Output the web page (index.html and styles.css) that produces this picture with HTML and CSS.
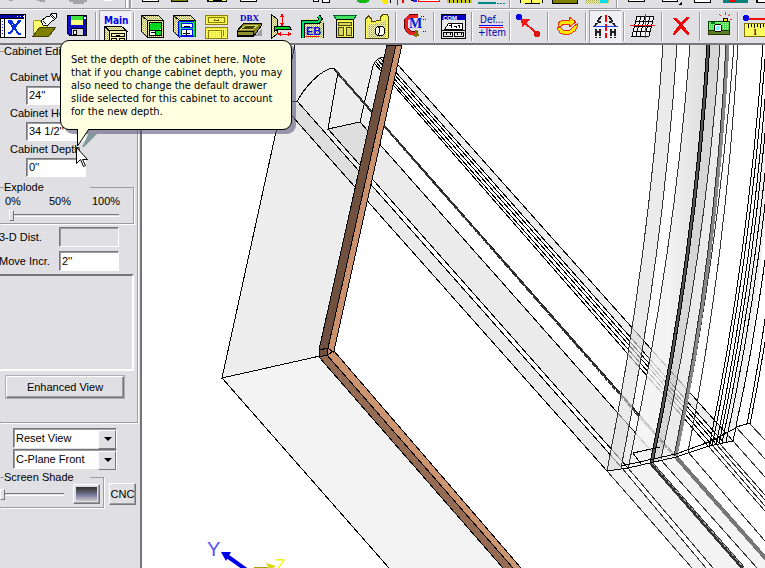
FILE: index.html
```html
<!DOCTYPE html>
<html lang="en">
<head>
    <meta charset="UTF-8">
    <meta name="viewport" content="width=device-width, initial-scale=1.0">
    <title>Cabinet Editor</title>
    <link rel="stylesheet" href="styles.css">
</head>
<body>
    <!-- shared fills for the icons -->
    <svg class="defs" width="0" height="0" aria-hidden="true">
        <defs>
            <pattern id="dither" width="2" height="2" patternUnits="userSpaceOnUse">
                <rect width="2" height="2" fill="#f4f4b8"/>
                <rect width="1" height="1" fill="#a0a040"/>
                <rect x="1" y="1" width="1" height="1" fill="#c8c878"/>
            </pattern>
            <pattern id="yellow" width="2" height="2" patternUnits="userSpaceOnUse">
                <rect width="2" height="2" fill="#ffff60"/>
                <rect width="1" height="1" fill="#e0d838"/>
            </pattern>
            <pattern id="lime" width="2" height="2" patternUnits="userSpaceOnUse">
                <rect width="2" height="2" fill="#50e050"/>
                <rect width="1" height="1" fill="#e0ffe0"/>
            </pattern>
            <linearGradient id="post" x1="0" x2="1">
                <stop offset="0" stop-color="#f4f4f4"/>
                <stop offset=".5" stop-color="#f0f0f0"/>
                <stop offset="1" stop-color="#d4d4d4"/>
            </linearGradient>
        </defs>
    </svg>

    <header class="toolbars">
        <div class="toolbar toolbar-top">
            <svg width="765" height="8" viewBox="0 0 765 8" shape-rendering="crispEdges" aria-hidden="true">
                <path d="M9 0h4v1h-4zM37 0h8v2h-5v-1h-3zM69 0h18v2h-3v2h-11v-2h-4z" fill="#a5a4ab"/>
                <path d="M104 0h8v1h-8z" fill="#fff"/>
                <path d="M125 0h1v8h-1zM129 0h2v8h-2z" fill="#9d9da1"/>
                <path d="M126 0h2v8h-2zM131 0h1v8h-1z" fill="#fff"/>
                <path d="M142 0h17v2h-17zM240 0h17v2h-17zM313 0h6v2h-6zM322 0h8v3h-8zM628 0h17v2h-17zM662 0h16v2h-16zM694 0h17v3h-17zM756 0h9v3h-9z" fill="#000"/>
                <path d="M143 0h15v1h-15zM241 0h15v1h-15zM314 0h4v1h-4zM323 0h6v2h-6zM629 0h15v1h-15zM663 0h14v1h-14zM695 0h15v2h-15zM758 0h7v2h-7z" fill="#fff"/>
                <path d="M171 0h17v2h-17zM207 0h20v2h-20zM552 0h26v4h-26z" fill="#000"/>
                <path d="M172 0h15v1h-15zM553 0h24v3h-24z" fill="#808000"/>
                <path d="M209 0h4v1h-4zM222 0h4v1h-4zM520 0h22v3h-22z" fill="#ffff60"/>
                <path d="M357 0h12v2h-2v1h-8v-1h-2z" fill="#18b818"/>
                <path d="M382 0h6v2h-1v2h-4v-2h-1z" fill="#ffe800"/>
                <path d="M390 0h1v3h-1zM411 0h2v1h-2z" fill="#000"/>
                <path d="M397 0h1v5h-1zM402 0h2v3h-2zM418 0h22v2h-22z" fill="#f00"/>
                <path d="M413 0h4v2h-4z" fill="#22f"/>
                <path d="M419 0h20v1h-20z" fill="#fff"/>
                <path d="M447 0h25v3h-25z" fill="#c8c830"/>
                <path d="M449 0v3M453 0v3M457 0v3M461 0v3M465 0v3M469 0v3M520 0v3M525 3h15M531 0v3M542 0v3" stroke="#000"/>
                <path d="M478 2h18v2h-18z" fill="#088"/>
                <path d="M497 3h9" stroke="#088" stroke-dasharray="2 1"/>
                <path d="M585 0h24v4h-24z" fill="url(#dither)"/>
                <path d="M600 0h8v3h-8z" fill="#0de"/>
                <path d="M616 0h1v8h-1zM509 0h1v8h-1z" fill="#9d9da1"/>
                <path d="M617 0h1v8h-1zM510 0h1v8h-1z" fill="#fff"/>
                <path d="M682 1v4h-4z" fill="#000"/>
                <path d="M723 0h25v3h-25z" fill="#088080"/>
                <path d="M730 0h6v2h-6z" fill="#f00"/>
            </svg>
        </div>
        <div class="toolbar toolbar-main">
            <button class="tool" aria-label="Close window"><svg viewBox="0 0 24 24">
                <path d="M-1 .5h25v23h-25z" fill="#fff" stroke="#000"/>
                <path d="M-1 1h24v3h-24z" fill="#0000a0"/>
                <path d="M16 2h1M19 2h1M22 2h1" stroke="#fff"/>
                <path d="M-1 4.500h24M3.500 4v19" stroke="#000"/>
                <path d="M1 7v1M1 10v1M1 13v1M1 16v1M1 19v1" stroke="#00f"/>
                <path d="M7 7l3 0 4 5 4-5h2M8 8l10 12h2M18 8l-9 11h-2" fill="none" stroke="#0030e0" stroke-width="2"/>
            </svg></button>
            <button class="tool" aria-label="Open"><svg viewBox="0 0 24 24">
                <path d="M0 22V8l2-2h5l2 3h5v4h9L15 22z" fill="#ffff70" stroke="#a0a000"/>
                <path d="M0 22l7-9h16l-7 9z" fill="#808000" stroke="#404000"/>
                <path d="M8 7l5-4 4-1 2-3h4l1 4-3 3-2 1-4 4h-5z" fill="#fff" stroke="#000"/>
                <path d="M17 1l4 4M18 0l4 4M10 7l3 3" stroke="#000"/>
            </svg></button>
            <button class="tool" aria-label="Save"><svg viewBox="0 0 24 24">
                <path d="M2.500 1.500h19v20H5l-2.500-2z" fill="#1010c0" stroke="#000"/>
                <path d="M6 2h12v4H6z" fill="#40e040"/>
                <path d="M6 6h12v5H6z" fill="#ffff80"/>
                <path d="M19 3h2v2h-2z" fill="#fff"/>
                <path d="M6.500 14.500h12v7h-12z" fill="#d8d8d8" stroke="#000"/>
                <path d="M8.500 16.500h3v4h-3z" fill="#fff" stroke="#000"/>
            </svg></button>
            <span class="sep"></span>
            <button class="tool pressed" aria-label="Main"><svg class="tall" viewBox="0 0 24 30">
                <text x="1" y="10" class="t-main">Main</text>
                <path d="M1 12h17l6 5H7z" fill="url(#dither)" stroke="#000"/>
                <path d="M1 12l5 5v13H1z" fill="url(#dither)" stroke="#000"/>
                <path d="M6.500 16.500h17v14h-17z" fill="#f4f4b0" stroke="#000"/>
                <path d="M8.500 19.500h13v3h-13zM8.500 24.500h5v6h-5zM16.500 24.500h5v6h-5zM13 21h4" fill="none" stroke="#000"/>
            </svg></button>
            <span class="sep"></span>
            <button class="tool" aria-label="Cabinet"><svg viewBox="0 0 24 24">
                <path d="M.5 1.500h17l5 5h-16z" fill="url(#dither)" stroke="#000"/>
                <path d="M.5 1.500l6 5v17l-6-6z" fill="url(#dither)" stroke="#000"/>
                <path d="M6.500 6.500h16v17h-16z" fill="url(#dither)" stroke="#000"/>
                <path d="M8.500 8.500h12v13h-12z" fill="#fff" stroke="#000"/>
                <path d="M10 9h10v5l-2 2h-4l-5 0v-6z" fill="#00d820"/>
                <path d="M8 16h13M14.500 16v6M10 18h4" stroke="#000"/>
                <path d="M15 17h5v4h-5z" fill="#00d820"/>
            </svg></button>
            <button class="tool" aria-label="Face frame"><svg viewBox="0 0 24 24">
                <path d="M.5 1.500h17l5 5h-16z" fill="url(#dither)" stroke="#000"/>
                <path d="M.5 1.500l6 5v17l-6-6z" fill="url(#dither)" stroke="#000"/>
                <path d="M5.500 7.500h17v15h-17z" fill="#20d8a0" stroke="#00f"/>
                <path d="M8.500 9.500h11v4h-11zM8.500 15.500h11v6h-11z" fill="#fff" stroke="#00f"/>
                <path d="M11 12h6M13.500 16v6M10 19h7" stroke="#000"/>
                <path d="M6.500 7v16M21.500 7v16" stroke="#00d820"/>
            </svg></button>
            <button class="tool" aria-label="Doors and drawers"><svg viewBox="0 0 24 24">
                <path d="M.5 1.500h22v9H.5zM.5 13.500h22v11H.5z" fill="url(#yellow)" stroke="#908000"/>
                <path d="M3.500 3.500h16v5h-16zM3.500 16.500h13v8h-13zM18.500 16v6" fill="none" stroke="#908000"/>
                <path d="M9 5.500q3 3 5 0" fill="none" stroke="#706000"/>
            </svg></button>
            <button class="tool" aria-label="Drawer box"><svg viewBox="0 0 24 24">
                <text x="3" y="7" class="t-dbx">DBX</text>
                <path d="M17 22l8-8v8z" fill="#a0a0a0"/>
                <path d="M0 17l7-8h17v3l-7 10H0z" fill="#808020" stroke="#000"/>
                <path d="M4 15l5-4h12l-5 4z" fill="#404000" stroke="#d0d070"/>
                <path d="M.5 17.500h16v4h-16z" fill="#909030" stroke="#000"/>
            </svg></button>
            <button class="tool" aria-label="Shelf spacing"><svg viewBox="0 0 24 24">
                <path d="M2.500.5l6 5v14l-6 5z" fill="url(#dither)" stroke="#000"/>
                <path d="M5 12h15l2 3H9l-4 3z" fill="#00d820" stroke="#000"/>
                <path d="M13 1v10M10 20h12" stroke="#f00"/>
                <path d="M13-1l-2 4h4zM13 13l-2-4h4zM8 20l4-2v4zM23 20l-4-2v4z" fill="#f00"/>
            </svg></button>
            <button class="tool" aria-label="Edge banding"><svg viewBox="0 0 24 24">
                <path d="M1 24V7l4-2h12l6 3v16z" fill="url(#dither)"/>
                <path d="M1.500 24V8h16l2-3-2-3" fill="none" stroke="#000" stroke-width="4"/>
                <path d="M1.500 24V8h16l2-3-2-3" fill="none" stroke="#00d860" stroke-width="2"/>
                <path d="M22.500 9v15" stroke="#000"/>
                <text x="5" y="21" class="t-eb">EB</text>
                <path d="M5 22.500h13" stroke="#f00"/>
            </svg></button>
            <button class="tool" aria-label="Moldings"><svg viewBox="0 0 24 24">
                <path d="M.5 1.500h23l-3 4h-17z" fill="#40e060" stroke="#006020"/>
                <path d="M3.500 5.500h17v18h-17z" fill="url(#yellow)" stroke="#000"/>
                <path d="M5.500 8.500h13v3h-13zM5.500 13.500h5v8h-5zM13.500 13.500h5v8h-5z" fill="#d8d860" stroke="#504800"/>
            </svg></button>
            <button class="tool" aria-label="Custom shape"><svg viewBox="0 0 24 24">
                <path d="M.5 24.500V5l3-3 3 3v3l9-2V3l3-3h4l1 4v20z" fill="url(#yellow)" stroke="#504800"/>
                <path d="M3 24V11l14-3 4-3v19z" fill="url(#dither)"/>
                <circle cx="15" cy="17" r="5" fill="#fff" stroke="#000"/>
                <path d="M13 12q4 4 0 9" fill="none" stroke="#000"/>
            </svg></button>
            <span class="sep"></span>
            <button class="tool" aria-label="Cut manager"><svg viewBox="0 0 24 24">
                <path d="M15 2H7L3 6v8l4 5h8" fill="none" stroke="#600" stroke-width="4"/>
                <path d="M15 2H7L3 6v8l4 5h8" fill="none" stroke="#e82020" stroke-width="3"/>
                <path d="M13 16v7M10 21h6" stroke="#807000" stroke-width="2"/>
                <text x="6" y="14" class="t-cm">M</text>
                <path d="M18 2h4M20 5h3M20 17h3" stroke="#222" stroke-dasharray="1 1"/>
            </svg></button>
            <span class="sep"></span>
            <button class="tool" aria-label="Command window"><svg viewBox="0 0 24 24">
                <path d="M.5.5h24v24H.5z" fill="#e8e8e8" stroke="#000"/>
                <path d="M1 1h23v5H1z" fill="#0000c8"/>
                <text x="2" y="6" class="t-com">COM</text>
                <path d="M3.500 15.500l4-6h14v6z" fill="#fff" stroke="#000"/>
                <path d="M1 16.500h23M2.500 18.500h9v4h-9zM13.500 18.500h9v4h-9zM8 12l2-1v3M13 12h2v2M17 11l2 1-1 2M5 21v-2M9 21v-2M16 21v-2M20 21v-2" fill="none" stroke="#000"/>
            </svg></button>
            <span class="sep"></span>
            <button class="tool" aria-label="Default item"><svg viewBox="0 0 24 24">
                <text x="1" y="9" class="t-def">Def...</text>
                <path d="M0 11.500h24" stroke="#00f"/>
                <path d="M0 13.500h24" stroke="#f00"/>
                <text x="-1" y="22" class="t-def">+Item</text>
            </svg></button>
            <span class="sep"></span>
            <button class="tool" aria-label="Point to point"><svg viewBox="0 0 24 24">
                <path d="M19 19L6 7" stroke="#f01818" stroke-width="2"/>
                <path d="M4 5h9l-8 8z" fill="#f01818"/>
                <circle cx="2" cy="3" r="3" fill="#0000f0"/>
                <circle cx="20" cy="20" r="3" fill="#e01010"/>
            </svg></button>
            <span class="sep"></span>
            <button class="tool" aria-label="Rotate"><svg viewBox="0 0 24 24">
                <path d="M14 3v3H8L3 9v3h3l3-2h5v3l7-5zM2 14l3 5 3 1h7l5-3 2-4v-3l-3 2-4 4H8l-3-3z" fill="#ffe800" stroke="#e83010"/>
            </svg></button>
            <span class="sep"></span>
            <button class="tool pressed" aria-label="Break line"><svg viewBox="0 0 24 24">
                <path d="M8 2L2 12M5 8h3M16 2l6 10M19 8h-3M3 15v9M7 15v9M18 15v9M22 15v9M3 18h4M18 18h4" stroke="#222" stroke-width="2" stroke-dasharray="7 1"/>
                <path d="M12.500 1v23" stroke="#f00" stroke-width="2" stroke-dasharray="7 2"/>
                <path d="M0 12.500h25" stroke="#2040e0"/>
            </svg></button>
            <span class="sep"></span>
            <button class="tool" aria-label="Grid"><svg viewBox="0 0 24 24">
                <path d="M6 2h17l-5 20H1zM5 7h17M4 12h17M2 17h17M10 2L5 22M14 2L9 22M19 2l-5 20" fill="#fff" fill-opacity=".6" stroke="#000"/>
                <path d="M-1 11.500h25M14.500 0v24" stroke="#f01818"/>
            </svg></button>
            <span class="sep"></span>
            <button class="tool" aria-label="Delete"><svg viewBox="0 0 24 24">
                <path d="M4 4h3l5 5 5-6h3v1l-6 7 6 8v2h-2l-6-7-6 7H4l1-3 5-7-6-6z" fill="#f00808"/>
            </svg></button>
            <span class="sep"></span>
            <button class="tool" aria-label="Camera"><svg viewBox="0 0 24 24">
                <path d="M1 7h21v12H1z" fill="url(#lime)" stroke="#004000"/>
                <path d="M1 16h21v4H1z" fill="#508020" stroke="#303000"/>
                <path d="M16 4h4v3h-4z" fill="#ffe000" stroke="#000"/>
                <path d="M4 8h4v2H4z" fill="#008020"/>
                <circle cx="11" cy="14" r="4" fill="#fff" stroke="#000"/>
                <circle cx="11" cy="14" r="2" fill="#80f0ff"/>
                <path d="M14 2l-2-2M18 1v-3M21 2l2-2M23 5h2" stroke="#f03010"/>
            </svg></button>
            <span class="sep"></span>
            <button class="tool" aria-label="Measure"><svg viewBox="0 0 24 24">
                <path d="M0 4.500h24" stroke="#f01010" stroke-width="2"/>
                <circle cx="1" cy="4" r="3" fill="#0000f0"/>
                <path d="M-.5 9.500h26v13h-26z" fill="#ffff60" stroke="#807000"/>
                <path d="M3.500 10v4M6.500 10v3M9.500 10v4M12.500 10v3M15.500 10v4M18.500 10v3M21.500 10v6" stroke="#000"/>
                <text x="8" y="21" class="t-ruler">1</text>
            </svg></button>
        </div>
    </header>

    <main class="workspace">
        <aside class="sidebar">
            <fieldset class="group editor">
                <legend>Cabinet Editor</legend>
                <div class="dimensions">
                    <label for="width">Cabinet Width</label>
                    <input class="field" id="width" type="text" value="24''">
                    <label for="height">Cabinet Height</label>
                    <input class="field" id="height" type="text" value="34 1/2''">
                    <label for="depth">Cabinet Depth</label>
                    <input class="field" id="depth" type="text" value="0''">
                </div>
                <fieldset class="group explode">
                    <legend>Explode</legend>
                    <div class="scale"><span>0%</span><span>50%</span><span>100%</span></div>
                    <input class="slider" type="range" min="0" max="100" value="0" aria-label="Explode">
                </fieldset>
                <div class="distances">
                    <label for="dist">3-D Dist.</label>
                    <input class="field" id="dist" type="text" disabled>
                    <label for="incr">Move Incr.</label>
                    <input class="field" id="incr" type="text" value="2''">
                </div>
                <div class="listbox"></div>
                <button class="btn btn-default">Enhanced View</button>
            </fieldset>

            <div class="views">
                <div class="combo">
                    <select aria-label="View"><option>Reset View</option></select>
                </div>
                <div class="combo">
                    <select aria-label="Construction plane"><option>C-Plane Front</option></select>
                </div>
            </div>

            <div class="shade-row">
                <fieldset class="group shade">
                    <legend>Screen Shade</legend>
                    <div class="shade-controls">
                        <input class="slider" type="range" min="0" max="100" value="0" aria-label="Screen Shade">
                        <button class="btn swatch" aria-label="Shade colour"><span></span></button>
                    </div>
                </fieldset>
                <button class="btn cnc">CNC</button>
            </div>
        </aside>

        <section class="viewport">
            <svg viewBox="142 45 623 523" preserveAspectRatio="xMinYMin slice" shape-rendering="crispEdges" role="img" aria-label="Cabinet wireframe">
                <!-- side and bottom panels -->
                <path d="M295 45H388L320 356 222 378z" fill="#ededed"/>
                <path d="M222 378L320 356 505 568H389z" fill="#f3f3f3"/>
                <path d="M295 45L222 378 320 356M222 378L389 568" class="ln"/>

                <!-- lower rail -->
                <path d="M297 102L622 468 607 471 292 116z" fill="#ebebeb"/>
                <path d="M297 102L365 179 352 184 292 116z" fill="#dedede"/>
                <path d="M328 129L360 122 655 455 628 468z" fill="#ebebeb"/>
                <path d="M328 129L360 122 378 143 366 172z" fill="#dedede"/>
                <path d="M292 116L607 471M292 101L297 101 622 468M328 129L628 468M360 122L655 455" class="ln"/>
                <path d="M297 102C304 88 320 70 333 68L338 72 328 129 360 122 373 66Q377 56 386 57" class="ln"/>
                <path d="M334 68L674 454M336 72L653 431" stroke="#222" stroke-width="1" fill="none"/>
                <path d="M335 70L674 456" stroke="#333" stroke-width="2" stroke-dasharray="5 1" fill="none"/>

                <!-- upper rail -->
                <path d="M398 65L733 441 724 443 396 73z" fill="#ececec"/>
                <path d="M375 64L709 447M375 61L713 446M377 59L717 445M380 58L720 444M386 61L724 443M390 56L733 441" class="ln"/>

                <!-- post -->
                <path d="M663 45Q649 258 607 471L621 468Q663 258 677 45z" fill="#ddd" fill-opacity=".6"/>
                <path d="M690 45Q674 258 628 469L651 463Q694 258 708 45z" fill="url(#post)" fill-opacity=".8"/>
                <path d="M708 45Q694 258 651 463L661 459Q705 258 720 45z" fill="#c8c8c8" fill-opacity=".75"/>
                <path d="M720 45Q705 258 661 459L676 456Q717 258 728 45z" fill="#e4e4e4" fill-opacity=".7"/>
                <path d="M663 45Q649 258 607 471M677 45Q663 258 621 468M690 45Q674 258 628 469M720 45Q705 258 661 459M734 45Q718 258 677 455M738 45Q726 258 688 452" class="ln thin"/>
                <path d="M708 45Q694 258 651 463" fill="none" stroke="#555" stroke-width="3"/>
                <path d="M707 45Q693 258 650 463M710 45Q696 258 653 463" class="ln"/>
                <path d="M728 45Q717 258 676 456" fill="none" stroke="#888" stroke-width="3"/>
                <path d="M726 45Q715 258 674 456" class="ln thin"/>

                <!-- far post -->
                <path d="M768 45Q757 258 724 443L736 428Q770 250 776 45z" fill="#e8e8e8" fill-opacity=".7"/>
                <path d="M763 45Q748 258 709 447M766 45Q751 258 712 446M769 45Q755 258 716 445M772 45Q758 258 719 444M776 45Q762 258 722 443M779 45Q766 258 726 442M785 45Q773 258 736 426M792 45Q780 258 747 424M796 45Q784 258 750 424" class="ln"/>

                <!-- rails running past the joint -->
                <path d="M607 471L622 468 706 568H692z" fill="#f2f2f2"/>
                <path d="M628 468L652 463 743 568H713z" fill="#f3f3f3"/>
                <path d="M661 460L676 456 765 558V568H755z" fill="#f3f3f3"/>
                <path d="M607 471L692 568M622 468L706 568M628 468L713 568M661 460L757 568M688 452L765 541M709 447L765 511M713 446L765 506M717 445L765 500M720 444L765 495M733 441L765 477M736 427L765 459M750 424L765 440" class="ln thin"/>
                <path d="M651 463L743 568" stroke="#333" stroke-width="4"/>
                <path d="M652 463L744 568" stroke="#aaa" stroke-dasharray="4 2"/>
                <path d="M676 457L768 561" stroke="#777" stroke-width="4"/>
                <path d="M607 471L628 468 676 457 709 446 733 441 736 427 750 423M621 466L676 454 709 442 736 428M633 453L660 447M633 453L641 464" class="ln"/>

                <!-- front frame -->
                <path d="M387 45H396L328 348 327 355 319 357 319 350z" fill="#70503e" class="ln"/>
                <path d="M396 45H402L334 351 327 355 328 348z" fill="#cb906c" class="ln"/>
                <path d="M319 357L327 355 513 568H503z" fill="#956b53" class="ln"/>
                <path d="M327 355L334 351 521 568H513z" fill="#cd956f" class="ln"/>
                <path d="M319 350L328 348 334 353" class="ln"/>

                <!-- axis triad -->
                <g shape-rendering="auto">
                    <path d="M248 571L227 556" stroke="#0000e8" stroke-width="4"/>
                    <path d="M221 552L231 552 226 561z" fill="#0000e8"/>
                    <path d="M254 568H268" stroke="#a8a000" stroke-width="2"/>
                    <path d="M266 563L276 566 270 570z" fill="#d8d800"/>
                    <text x="207" y="556" class="axis-y">Y</text>
                    <text x="275" y="572" class="axis-z">Z</text>
                </g>
            </svg>
        </section>
    </main>

    <div class="balloon" role="tooltip">
        <svg class="balloon-tail" width="24" height="24" viewBox="0 0 24 24" aria-hidden="true">
            <path d="M6 19L13 5H22L8 19z" fill="#809a9c"/>
            <path d="M1 0V19L13 0z" fill="#ffffe1"/>
            <path d="M1.500 1V18L13 1" fill="none" stroke="#000"/>
        </svg>
        <p>Set the depth of the cabinet here. Note that if you change cabinet depth, you may also need to change the default drawer slide selected for this cabinet to account for the new depth.</p>
    </div>

    <svg class="cursor" width="13" height="21" viewBox="0 0 13 21" aria-hidden="true">
        <path d="M.5.5v16l4-4 3 7 2-1-3-6h5z" fill="#fff" stroke="#000"/>
    </svg>
</body>
</html>
```
FILE: styles.css
```css
* {
    box-sizing: border-box;
}
body {
    margin: 0;
    height: 100vh;
    display: flex;
    flex-direction: column;
    overflow: hidden;
    background: #e0dfe3;
    color: #000;
    font: 11px/12px "Liberation Sans", Arial, sans-serif;
}
button, input, select {
    font: inherit;
    color: inherit;
    margin: 0;
    border-radius: 0;
}
.defs {
    position: absolute;
}

/* toolbars */
.toolbars {
    flex: none;
    border-bottom: 2px solid #77767b;
}
.toolbar {
    display: flex;
    overflow: hidden;
}
.toolbar svg {
    flex: none;
    display: block;
    overflow: visible;
}
.toolbar-top {
    height: 9px;
    border-bottom: 1px solid #9d9da1;
}
.toolbar-main {
    height: 34px;
    margin-left: -3px;
    border-top: 1px solid #fff;
}
.tool {
    flex: none;
    width: 32px;
    height: 34px;
    padding: 4px 4px 0;
    border: 0;
    background: none;
    display: flex;
    align-items: flex-start;
    overflow: hidden;
}
.tool svg {
    width: 24px;
    height: 24px;
    shape-rendering: crispEdges;
}
.tool svg.tall {
    height: 30px;
}
.tool.pressed {
    background: #f0f0f4;
    box-shadow: inset 1px 1px #9d9da1, inset -1px -1px #fff;
}
.sep {
    flex: none;
    width: 2px;
    margin: 2px;
    background: linear-gradient(90deg, #9d9da1 50%, #fff 50%);
}
.t-main {
    font: bold 10px "DejaVu Sans Condensed", sans-serif;
    fill: #0000f0;
}
.t-dbx {
    font: bold 9px "Liberation Serif", serif;
    fill: #0000d0;
}
.t-eb {
    font: bold 11px "Liberation Sans", sans-serif;
    fill: #0000f0;
}
.t-cm {
    font: bold 14px "Liberation Serif", serif;
    fill: #0020e0;
}
.t-com {
    font: bold 6px "Liberation Sans", sans-serif;
    fill: #fff;
}
.t-def {
    font: 10px "DejaVu Sans Condensed", sans-serif;
    fill: #0000b0;
}
.t-ruler {
    font: bold 8px "Liberation Serif", serif;
}

/* workspace */
.workspace {
    flex: 1;
    min-height: 0;
    display: flex;
}
.sidebar {
    flex: none;
    width: 142px;
    border-right: 2px solid #77767b;
    overflow: hidden;
}
.viewport {
    flex: 1;
    min-width: 0;
    background: #fff;
}
.viewport svg {
    display: block;
    width: 100%;
    height: 100%;
}
.ln {
    stroke: #000;
    stroke-width: 1;
}
.ln:not([fill]) {
    fill: none;
}
.thin {
    stroke: #333;
}
.axis-y, .axis-z {
    font: 20px "Liberation Sans", sans-serif;
    fill: #5454ff;
}
.axis-z {
    font-size: 18px;
    fill: #f4f420;
}

/* group boxes */
.group {
    min-width: 0;
    margin: 0;
    padding: 0;
    border: 1px solid #9d9da1;
    border-left: 0;
    box-shadow: 1px 1px #fff;
}
.group legend {
    padding: 0;
    margin-left: 4px;
    width: 86px;
    white-space: nowrap;
}
.editor {
    width: 138px;
    padding-bottom: 23px;
}
.dimensions {
    display: flex;
    flex-direction: column;
    padding: 14px 0 0 10px;
}
.dimensions .field {
    width: 60px;
    height: 19px;
    margin: 3px 0 2px 16px;
}
.field {
    padding: 0 2px 1px;
    border: 1px solid;
    border-color: #77767b #fff #fff #77767b;
    box-shadow: inset 1px 1px #9d9da1;
    background: #fff;
}
.field:disabled {
    background: #e0dfe3;
}
.explode {
    width: 134px;
    margin-top: 2px;
    padding-bottom: 2px;
}
.scale {
    display: grid;
    grid-template-columns: 44px 43px auto;
    padding: 2px 0 2px 5px;
}
.slider {
    display: block;
    appearance: none;
    -webkit-appearance: none;
    background: none;
    height: 12px;
}
.slider::-webkit-slider-runnable-track {
    height: 3px;
    background: #e0dfe3;
    border-top: 1px solid #77767b;
    border-bottom: 1px solid #fff;
}
.slider::-webkit-slider-thumb {
    -webkit-appearance: none;
    width: 5px;
    height: 11px;
    margin-top: -5px;
    background: #e0dfe3;
    border: 1px solid;
    border-color: #fff #77767b #77767b #fff;
}
.explode .slider {
    width: 110px;
    margin-left: 9px;
}
.distances {
    display: grid;
    grid-template-columns: 60px 60px;
    row-gap: 4px;
    margin: 3px 0 3px -1px;
    align-items: center;
    white-space: nowrap;
}
.distances .field {
    height: 20px;
}
.listbox {
    width: 134px;
    height: 97px;
    border: 2px solid;
    border-color: #77767b #fff #fff;
    border-left: 0;
}
.btn {
    padding: 0;
    background: #e0dfe3;
    border: 1px solid;
    border-color: #fff #77767b #77767b #fff;
    box-shadow: inset -1px -1px #9d9da1;
}
.btn-default {
    display: block;
    width: 120px;
    height: 24px;
    margin: 4px 0 0 5px;
    border: 2px solid;
    border-color: #fff #77767b #77767b #fff;
    outline: 1px solid #b0afb5;
    outline-offset: -1px;
}

/* view selectors */
.views {
    display: flex;
    flex-direction: column;
    gap: 1px;
    margin: 5px 0 2px 13px;
}
.combo {
    position: relative;
    width: 104px;
}
.combo select {
    display: block;
    appearance: none;
    -webkit-appearance: none;
    width: 100%;
    height: 20px;
    padding: 0 18px 0 2px;
    background: #fff;
    border: 1px solid;
    border-color: #77767b #fff #fff #77767b;
    box-shadow: inset 1px 1px #9d9da1;
}
.combo::before {
    content: "";
    position: absolute;
    right: 1px;
    top: 2px;
    width: 16px;
    height: 17px;
    background: #e0dfe3;
    border: 1px solid;
    border-color: #fff #77767b #77767b #fff;
    pointer-events: none;
}
.combo::after {
    content: "";
    position: absolute;
    right: 5px;
    top: 9px;
    border: 4px solid transparent;
    border-top-color: #000;
    border-bottom: 0;
    pointer-events: none;
}
.shade-row {
    display: flex;
    align-items: flex-end;
    gap: 5px;
}
.shade {
    width: 104px;
    padding-bottom: 3px;
}
.shade-controls {
    display: flex;
    align-items: center;
    padding-top: 1px;
}
.shade-controls .slider {
    width: 64px;
    margin-right: 9px;
}
.swatch {
    width: 27px;
    height: 20px;
    padding: 2px;
}
.swatch span {
    display: block;
    height: 14px;
    background: linear-gradient(#303030, #606070 40%, #8080a8 60%, #c8c8c8);
}
.cnc {
    width: 27px;
    height: 22px;
    margin-bottom: 3px;
}

/* help balloon */
.balloon {
    position: absolute;
    left: 60px;
    top: 40px;
    width: 232px;
    padding: 12px 4px 11px 10px;
    background: #ffffe1;
    border: 1px solid #000;
    border-radius: 9px;
    box-shadow: 4px 4px rgba(90, 90, 120, .6);
    font: 11px/13px "DejaVu Sans Condensed", "DejaVu Sans", sans-serif;
}
.balloon p {
    margin: 0;
}
.balloon-tail {
    position: absolute;
    left: 15px;
    top: 100%;
    margin-top: -1px;
}
.cursor {
    position: absolute;
    left: 76px;
    top: 147px;
}
```
